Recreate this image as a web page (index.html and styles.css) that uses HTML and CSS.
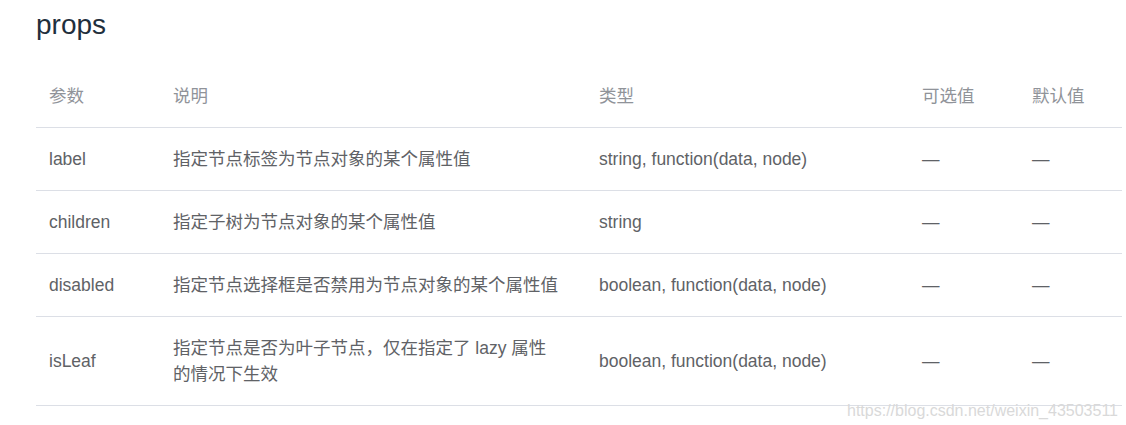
FILE: index.html
```html
<!DOCTYPE html>
<html lang="zh-CN">
<head>
<meta charset="utf-8">
<title>props</title>
<link rel="stylesheet" href="styles.css">
</head>
<body>
<div class="page">
  <h3 class="title">props</h3>
  <table class="props-table">
    <colgroup>
      <col class="c-param">
      <col class="c-desc">
      <col class="c-type">
      <col class="c-opt">
      <col class="c-def">
    </colgroup>
    <thead>
      <tr><th>参数</th><th>说明</th><th>类型</th><th>可选值</th><th>默认值</th></tr>
    </thead>
    <tbody>
      <tr><td>label</td><td class="desc">指定节点标签为节点对象的某个属性值</td><td>string, function(data, node)</td><td>—</td><td>—</td></tr>
      <tr><td>children</td><td class="desc">指定子树为节点对象的某个属性值</td><td>string</td><td>—</td><td>—</td></tr>
      <tr><td>disabled</td><td class="desc">指定节点选择框是否禁用为节点对象的某个属性值</td><td>boolean, function(data, node)</td><td>—</td><td>—</td></tr>
      <tr><td>isLeaf</td><td class="desc">指定节点是否为叶子节点，仅在指定了 lazy 属性的情况下生效</td><td>boolean, function(data, node)</td><td>—</td><td>—</td></tr>
    </tbody>
  </table>
  <div class="watermark">https://blog.csdn.net/weixin_43503511</div>
</div>
</body>
</html>
```
FILE: styles.css
```css
html, body {
  margin: 0;
  padding: 0;
  background: #fff;
}
body {
  font-family: "Liberation Sans", Arial, "Noto Sans CJK SC", sans-serif;
}
.page {
  position: relative;
  padding: 0 4px 0 36px;
  height: 425px;
  box-sizing: border-box;
}
.title {
  margin: 4px 0 19px;
  font-size: 28px;
  line-height: 42px;
  font-weight: normal;
  color: #1f2f3d;
}
.props-table {
  width: 1086px;
  border-collapse: collapse;
  table-layout: fixed;
  font-size: 17.5px;
  line-height: 26px;
}
.c-param { width: 124px; }
.c-desc { width: 426px; }
.c-type { width: 323px; }
.c-opt { width: 110px; }
.c-def { width: 103px; }
.props-table th,
.props-table td {
  padding: 18px 13px;
  text-align: left;
  vertical-align: middle;
  border-bottom: 1px solid #dcdfe6;
}
.props-table th {
  font-weight: normal;
  color: #909399;
}
.props-table td {
  color: #606266;
}
.props-table td.desc {
  padding-right: 25px;
}
.watermark {
  position: absolute;
  left: 847px;
  top: 398px;
  font-size: 16px;
  line-height: 18px;
  color: #d9d9d9;
  white-space: nowrap;
}
```
